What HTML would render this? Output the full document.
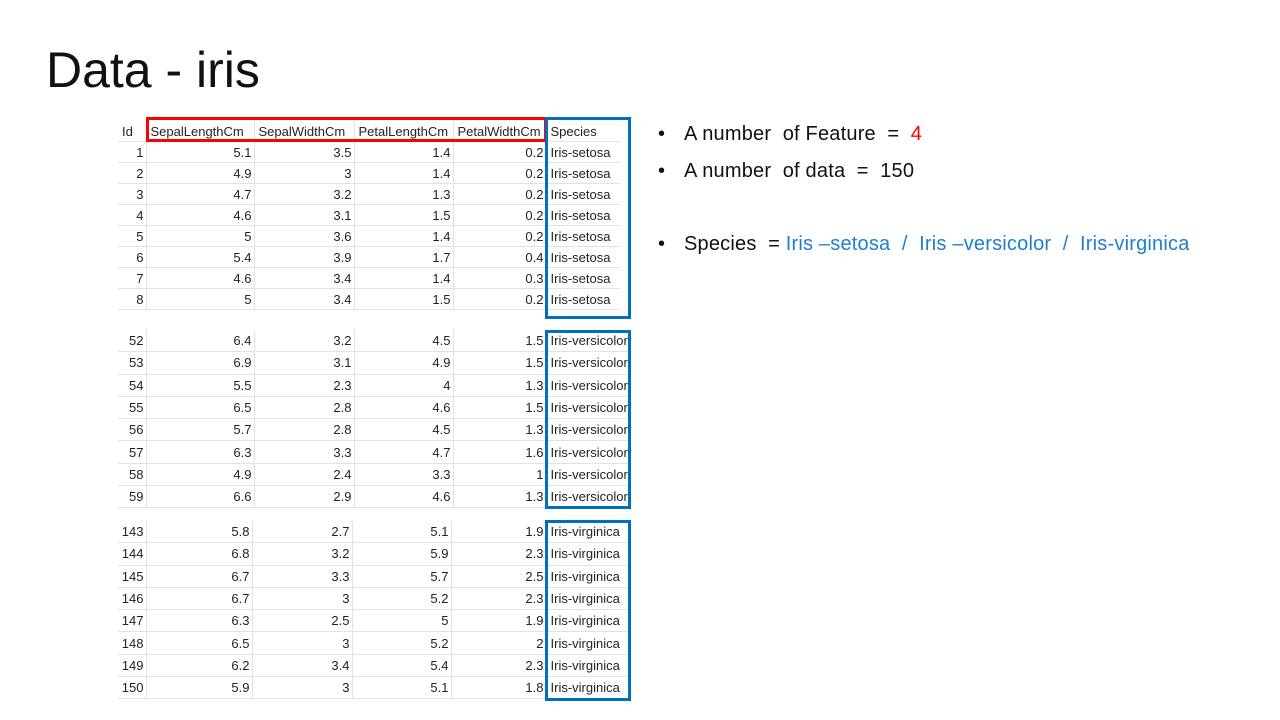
<!DOCTYPE html><html><head><style>
body{margin:0;width:1280px;height:720px;background:#fff;position:relative;overflow:hidden;font-family:"Liberation Sans","Noto Sans CJK KR",sans-serif}
.t{position:absolute;border-collapse:collapse;table-layout:fixed;font-size:13px;color:#222;left:118px}
.t td{padding:0 2px;border-bottom:1px solid #e2e2e2;border-right:1px solid #e2e2e2;text-align:right;white-space:nowrap;overflow:hidden}
.t td:last-child{text-align:left;border-right:none;padding-left:4px}
.t tr.h td{text-align:left;padding-left:4px}
.t td:first-child{border-right:1px solid #e2e2e2}
.t1 td{height:20px}
.t2 td,.t3 td{height:21.3px}
.box{position:absolute;box-sizing:border-box}
.b{position:absolute;left:660px;font-size:20px;color:#111;letter-spacing:0.2px}
.b span.d{position:absolute;left:-2px}
</style></head><body>
<div style="position:absolute;left:46px;top:41px;font-size:50px;color:#111">Data - iris</div>

<table class="t t1" style="top:121px;width:502px">
<colgroup><col style="width:28px"><col style="width:108px"><col style="width:100px"><col style="width:99px"><col style="width:93px"><col style="width:74px"></colgroup>
<tr class="h"><td>Id</td><td>SepalLengthCm</td><td>SepalWidthCm</td><td>PetalLengthCm</td><td>PetalWidthCm</td><td>Species</td></tr>
<tr><td>1</td><td>5.1</td><td>3.5</td><td>1.4</td><td>0.2</td><td>Iris-setosa</td></tr>
<tr><td>2</td><td>4.9</td><td>3</td><td>1.4</td><td>0.2</td><td>Iris-setosa</td></tr>
<tr><td>3</td><td>4.7</td><td>3.2</td><td>1.3</td><td>0.2</td><td>Iris-setosa</td></tr>
<tr><td>4</td><td>4.6</td><td>3.1</td><td>1.5</td><td>0.2</td><td>Iris-setosa</td></tr>
<tr><td>5</td><td>5</td><td>3.6</td><td>1.4</td><td>0.2</td><td>Iris-setosa</td></tr>
<tr><td>6</td><td>5.4</td><td>3.9</td><td>1.7</td><td>0.4</td><td>Iris-setosa</td></tr>
<tr><td>7</td><td>4.6</td><td>3.4</td><td>1.4</td><td>0.3</td><td>Iris-setosa</td></tr>
<tr><td>8</td><td>5</td><td>3.4</td><td>1.5</td><td>0.2</td><td>Iris-setosa</td></tr>
</table>

<table class="t t2" style="top:330px;width:511px">
<colgroup><col style="width:28px"><col style="width:108px"><col style="width:100px"><col style="width:99px"><col style="width:93px"><col style="width:83px"></colgroup>
<tr><td>52</td><td>6.4</td><td>3.2</td><td>4.5</td><td>1.5</td><td>Iris-versicolor</td></tr>
<tr><td>53</td><td>6.9</td><td>3.1</td><td>4.9</td><td>1.5</td><td>Iris-versicolor</td></tr>
<tr><td>54</td><td>5.5</td><td>2.3</td><td>4</td><td>1.3</td><td>Iris-versicolor</td></tr>
<tr><td>55</td><td>6.5</td><td>2.8</td><td>4.6</td><td>1.5</td><td>Iris-versicolor</td></tr>
<tr><td>56</td><td>5.7</td><td>2.8</td><td>4.5</td><td>1.3</td><td>Iris-versicolor</td></tr>
<tr><td>57</td><td>6.3</td><td>3.3</td><td>4.7</td><td>1.6</td><td>Iris-versicolor</td></tr>
<tr><td>58</td><td>4.9</td><td>2.4</td><td>3.3</td><td>1</td><td>Iris-versicolor</td></tr>
<tr><td>59</td><td>6.6</td><td>2.9</td><td>4.6</td><td>1.3</td><td>Iris-versicolor</td></tr>
</table>

<table class="t t3" style="top:521px;width:511px">
<colgroup><col style="width:28px"><col style="width:106px"><col style="width:100px"><col style="width:99px"><col style="width:95px"><col style="width:83px"></colgroup>
<tr><td>143</td><td>5.8</td><td>2.7</td><td>5.1</td><td>1.9</td><td>Iris-virginica</td></tr>
<tr><td>144</td><td>6.8</td><td>3.2</td><td>5.9</td><td>2.3</td><td>Iris-virginica</td></tr>
<tr><td>145</td><td>6.7</td><td>3.3</td><td>5.7</td><td>2.5</td><td>Iris-virginica</td></tr>
<tr><td>146</td><td>6.7</td><td>3</td><td>5.2</td><td>2.3</td><td>Iris-virginica</td></tr>
<tr><td>147</td><td>6.3</td><td>2.5</td><td>5</td><td>1.9</td><td>Iris-virginica</td></tr>
<tr><td>148</td><td>6.5</td><td>3</td><td>5.2</td><td>2</td><td>Iris-virginica</td></tr>
<tr><td>149</td><td>6.2</td><td>3.4</td><td>5.4</td><td>2.3</td><td>Iris-virginica</td></tr>
<tr><td>150</td><td>5.9</td><td>3</td><td>5.1</td><td>1.8</td><td>Iris-virginica</td></tr>
</table>

<div class="box" style="left:146px;top:117px;width:401px;height:25px;border:3px solid #f00"></div>
<div class="box" style="left:545px;top:117px;width:86px;height:202px;border:3px solid #0070c0"></div>
<div class="box" style="left:545px;top:330px;width:86px;height:179px;border:3px solid #0070c0"></div>
<div class="box" style="left:545px;top:520px;width:86px;height:181px;border:3px solid #0070c0"></div>

<div class="b" style="top:123px"><span class="d">•</span><span style="margin-left:24px">A number&nbsp; of Feature&nbsp; =&nbsp; <span style="color:#f00">4</span></span></div>
<div class="b" style="top:160px"><span class="d">•</span><span style="margin-left:24px">A number&nbsp; of data&nbsp; =&nbsp; 150</span></div>
<div class="b" style="top:233px"><span class="d">•</span><span style="margin-left:24px">Species&nbsp; = <span style="color:#1f7fcf">Iris –setosa&nbsp; /&nbsp; Iris –versicolor&nbsp; /&nbsp; Iris-virginica</span></span></div>
</body></html>
